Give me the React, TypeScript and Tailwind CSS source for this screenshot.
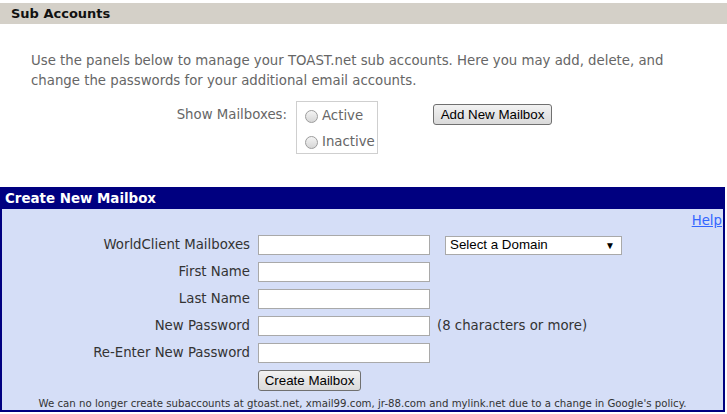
import React from "react";

const verdana = { fontFamily: '"DejaVu Sans", Verdana, sans-serif' };
const arial = { fontFamily: '"Liberation Sans", Arial, sans-serif' };

const Radio = ({ label }: { label: string }) => (
  <label className="flex h-[22px] items-center">
    <span className="ml-[8px] mr-[4px] h-[13px] w-[13px] rounded-full border border-[#9c9c9c] bg-linear-to-b from-[#f4f4f4] to-[#d6d6d6]" />
    <span className="text-[13.3px] leading-[22px] text-[#666]">{label}</span>
  </label>
);

const FormRow = ({ label, children }: { label: string; children?: React.ReactNode }) => (
  <div className="flex h-[20px] items-center">
    <div className="w-[248px] text-right text-[13.3px] leading-[20px] text-[#333]">{label}</div>
    <div className="ml-[8px] h-[20px] w-[172px] border border-[#a9a9a9] bg-white" />
    {children}
  </div>
);

const App = () => {
  return (
    <div className="w-[727px] h-[414px] bg-white overflow-hidden" style={verdana}>
      <div className="mt-[3px] h-[21px] bg-[#d4d0c8] pl-[11px] text-[13px] font-bold leading-[21px] text-[#111]">
        Sub Accounts
      </div>

      <p className="mt-[27px] w-[710px] pl-[31px] text-[13.3px] leading-[20px] text-[#666]">
        Use the panels below to manage your TOAST.net sub accounts. Here you may add, delete, and change the passwords for your additional email accounts.
      </p>

      <div className="mt-[10px] flex items-start">
        <div className="mt-[4px] w-[287px] text-right text-[13.3px] leading-[20px] text-[#666]">Show Mailboxes:</div>
        <div className="ml-[9px] flex h-[53px] w-[82px] flex-col gap-[4px] border border-[#cfcfcf] pt-[3px]">
          <Radio label="Active" />
          <Radio label="Inactive" />
        </div>
        <button
          className="ml-[55px] mt-[3px] h-[21px] w-[119px] rounded-[3px] border border-[#707070] bg-linear-to-b from-[#f2f2f2] to-[#dadada] text-[13.33px] leading-[19px] text-black"
          style={arial}
        >
          Add New Mailbox
        </button>
      </div>

      <div className="mt-[33px] w-[725px] border-2 border-[#000080] bg-[#d5def7]">
        <div className="h-[20px] bg-[#000080] pl-[3px] text-[13.4px] font-bold leading-[20px] text-white">
          Create New Mailbox
        </div>
        <div className="flex justify-end pr-[1px] pt-[4px]">
          <a href="#" className="text-[13.3px] leading-[16px] text-[#3366ff] underline">
            Help
          </a>
        </div>

        <div className="mt-[6px] flex flex-col gap-[7px]">
          <FormRow label="WorldClient Mailboxes">
            <div
              className="ml-[15px] flex h-[19px] w-[177px] items-center justify-between border border-[#a9a9a9] bg-white pl-[4px] pr-[6px] text-[13.33px] text-black"
              style={arial}
            >
              <span>Select a Domain</span>
              <span className="text-[10px]">▼</span>
            </div>
          </FormRow>
          <FormRow label="First Name" />
          <FormRow label="Last Name" />
          <FormRow label="New Password">
            <span className="ml-[7px] text-[13.3px] leading-[20px] text-[#333]">(8 characters or more)</span>
          </FormRow>
          <FormRow label="Re-Enter New Password" />
          <div className="flex">
            <button
              className="ml-[256px] h-[21px] w-[103px] rounded-[3px] border border-[#707070] bg-linear-to-b from-[#f2f2f2] to-[#dadada] text-[13.33px] leading-[19px] text-black"
              style={arial}
            >
              Create Mailbox
            </button>
          </div>
        </div>

        <p className="mt-[7px] text-center text-[10.2px] leading-[12px] text-[#333]">
          We can no longer create subaccounts at gtoast.net, xmail99.com, jr-88.com and mylink.net due to a change in Google's policy.
        </p>
      </div>
    </div>
  );
};

export default App;
